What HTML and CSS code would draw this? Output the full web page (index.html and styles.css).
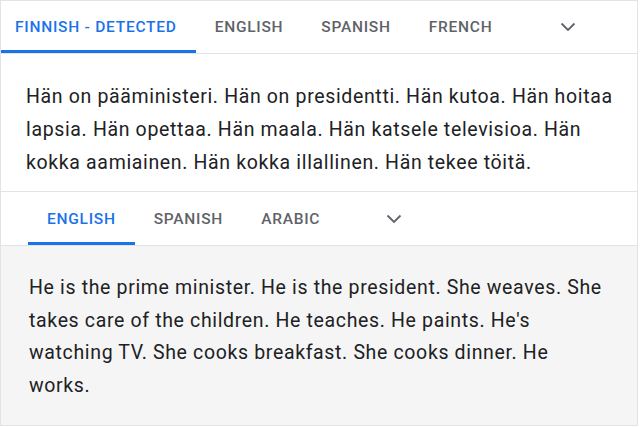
FILE: index.html
```html
<!DOCTYPE html>
<html>
<head>
<meta charset="utf-8">
<link rel="stylesheet" href="styles.css">
</head>
<body>
<div class="card">
  <div class="tabs tabs-top">
    <div class="tab tab-first active">Finnish - detected</div>
    <div class="tab">English</div>
    <div class="tab">Spanish</div>
    <div class="tab">French</div>
    <div class="chev chev-top">
      <svg width="16" height="10" viewBox="0 0 16 10"><path d="M1.5 1.5 L8 8 L14.5 1.5" fill="none" stroke="#5f6368" stroke-width="1.8"/></svg>
    </div>
  </div>
  <div class="source">Hän on pääministeri. Hän on presidentti. Hän kutoa. Hän hoitaa lapsia. Hän opettaa. Hän maala. Hän katsele televisioa. Hän kokka aamiainen. Hän kokka illallinen. Hän tekee töitä.</div>
  <div class="tabs tabs-bottom">
    <div class="tab active">English</div>
    <div class="tab">Spanish</div>
    <div class="tab">Arabic</div>
    <div class="chev chev-bottom">
      <svg width="16" height="10" viewBox="0 0 16 10"><path d="M1.5 1.5 L8 8 L14.5 1.5" fill="none" stroke="#5f6368" stroke-width="1.8"/></svg>
    </div>
  </div>
  <div class="target">He is the prime minister. He is the president. She weaves. She takes care of the children. He teaches. He paints. He's watching TV. She cooks breakfast. She cooks dinner. He works.</div>
</div>
</body>
</html>
```
FILE: styles.css
```css
html, body {
  margin: 0;
  padding: 0;
  background: #ffffff;
}
.card {
  width: 638px;
  height: 426px;
  border: 1px solid #e3e3e3;
  box-sizing: border-box;
  display: flex;
  flex-direction: column;
  font-family: Roboto, "Liberation Sans", sans-serif;
  overflow: hidden;
}
.tabs {
  display: flex;
  align-items: stretch;
  border-bottom: 1px solid #e3e3e3;
  flex: none;
}
.tabs-top {
  height: 52px;
}
.tabs-bottom {
  height: 53px;
  padding-left: 27px;
}
.tab {
  display: flex;
  align-items: center;
  padding: 0 19px;
  font-size: 15.5px;
  font-weight: 500;
  text-transform: uppercase;
  color: #5f6368;
  letter-spacing: 0.75px;
  border-bottom: 3px solid transparent;
  padding-top: 3px;
  box-sizing: border-box;
}
.tab-first {
  padding-left: 14px;
}
.tab.active {
  color: #1a73e8;
  border-bottom-color: #1a73e8;
}
.chev {
  display: flex;
  align-items: center;
}
.chev-top {
  margin-left: 49px;
}
.chev-bottom {
  margin-left: 47px;
}
.source {
  font-size: 19.5px;
  letter-spacing: 0.65px;
  line-height: 33px;
  color: #202124;
  padding: 26px 18px 12px 25px;
  border-bottom: 1px solid #e3e3e3;
  flex: none;
}
.target {
  flex: 1;
  background: #f5f5f5;
  font-size: 19.5px;
  letter-spacing: 0.65px;
  line-height: 32.7px;
  color: #202124;
  padding: 26px 24px 0 28px;
}
```
